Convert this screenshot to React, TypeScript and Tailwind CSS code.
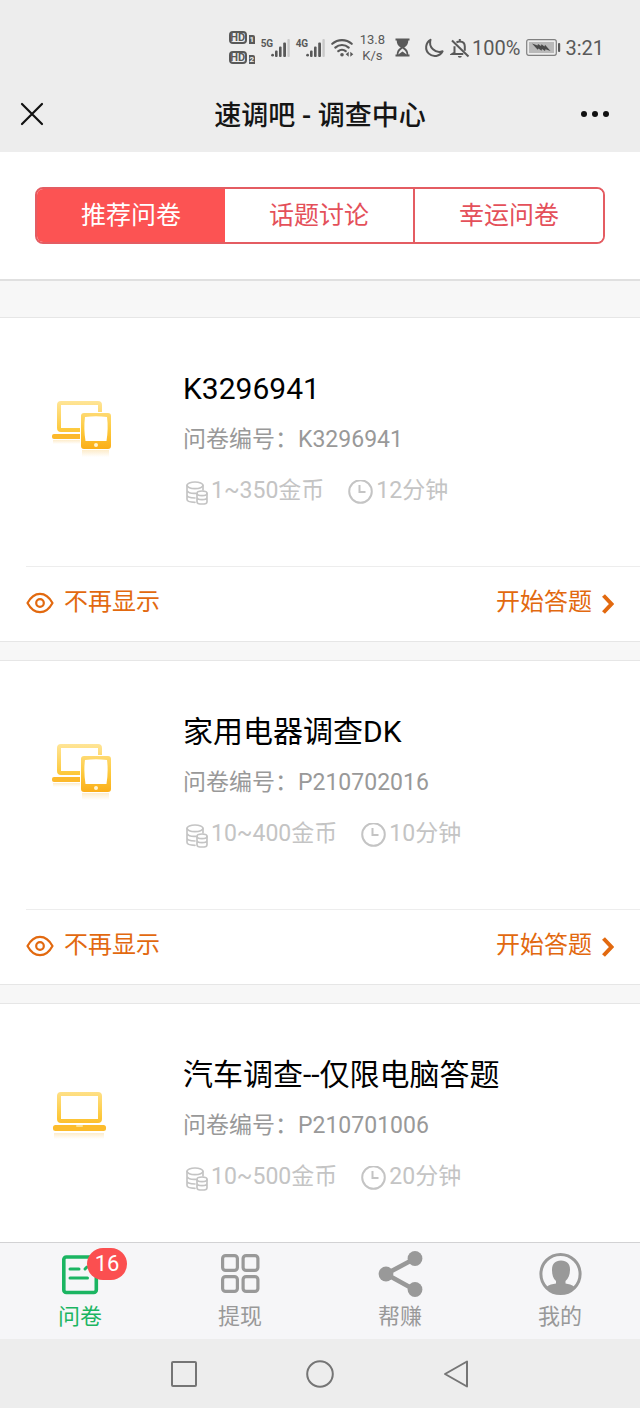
import { useState } from "react";
import type { ReactNode } from "react";
import { clsx } from "clsx";

const SEGMENTS = ["推荐问卷", "话题讨论", "幸运问卷"];

const SURVEYS = [
  { id: "K3296941", title: "K3296941", coins: "1~350金币", time: "12分钟", device: "multi" },
  { id: "P210702016", title: "家用电器调查DK", coins: "10~400金币", time: "10分钟", device: "multi" },
  { id: "P210701006", title: "汽车调查--仅限电脑答题", coins: "10~500金币", time: "20分钟", device: "laptop" },
];

const TABS = [
  { label: "问卷", icon: <DocIcon />, badge: 16 },
  { label: "提现", icon: <GridIcon /> },
  { label: "帮赚", icon: <ShareIcon /> },
  { label: "我的", icon: <UserIcon /> },
];

/* ---------- status bar ---------- */

function HdBadge({ sim }: { sim: number }) {
  return (
    <div className="flex items-end gap-0.5">
      <span className="flex h-[13px] w-[18px] items-center justify-center rounded-sm border-2 border-[#595959] text-[11px] leading-none font-bold">HD</span>
      <span className="flex h-[9px] w-1.5 items-center justify-center rounded-tr-xs bg-[#595959] text-[8px] leading-none font-bold text-[#ededed]">{sim}</span>
    </div>
  );
}

function Signal({ type }: { type: string }) {
  return (
    <div className="flex items-start">
      <span className="w-2.5 text-[10px] leading-3 font-bold tracking-tight">{type}</span>
      <svg className="h-[19px] w-[19px]" viewBox="0 0 19 19" fill="#595959">
        <circle cx="1.6" cy="17.2" r="1.4" />
        <rect x="4" y="12.5" width="2.6" height="6.5" rx="1" />
        <rect x="8" y="8.5" width="2.6" height="10.5" rx="1" />
        <rect x="12.200" y="4.500" width="2.800" height="14.500" rx="1" />
        <rect x="16.400" y="1" width="2.400" height="18" rx="1" fill="#c9c9c9" />
      </svg>
    </div>
  );
}

function StatusBar() {
  return (
    <div className="flex h-[76px] items-center justify-end pt-[19px] pr-9 text-[#595959]">
      <div className="flex items-center gap-1.5">
        <div className="flex flex-col gap-[7px]">
          <HdBadge sim={1} />
          <HdBadge sim={2} />
        </div>
        <Signal type="5G" />
        <Signal type="4G" />
        <svg className="h-[19px] w-[23px]" viewBox="0 0 23 19" fill="none" stroke="#595959" strokeWidth="2.2" strokeLinecap="round">
          <path d="M1.3 5.8a14.5 14.5 0 0 1 19.4 0" />
          <path d="M4.3 9.6a10 10 0 0 1 13.4 0" />
          <path d="M7.3 13.2a5.6 5.6 0 0 1 7.4 0" />
          <circle cx="11" cy="16.8" r="1.8" fill="#595959" stroke="none" />
          <path d="M17.7 13.8v5l-3-2.5zM19.3 13.8v5l3-2.5z" fill="#595959" stroke="none" />
        </svg>
        <span className="text-center text-[13px] leading-4">13.8<br />K/s</span>
      </div>
      <svg className="ml-2.5 h-[19px] w-[15px]" viewBox="0 0 15 19">
        <path d="M.5.5h14v2h-1.2c0 3.4-1.5 5.5-4 7 2.5 1.5 4 3.6 4 7h1.2v2H.5v-2h1.2c0-3.4 1.5-5.5 4-7-2.5-1.5-4-3.6-4-7H.5z" fill="#595959" />
        <path d="M7.5 10.5c-2.3 1.4-3.8 3.2-4.200 6 1.400-.6 2.700-2 4.200-2.900 1.500.9 2.800 2.300 4.200 2.900-.4-2.800-1.900-4.600-4.200-6z" fill="#ededed" />
      </svg>
      <svg className="ml-3.5 h-5 w-5" viewBox="0 0 20 20" fill="none" stroke="#595959" strokeWidth="2" strokeLinejoin="round">
        <path d="M6.5 1.8A8.7 8.7 0 1 0 18.6 13.3 9.3 9.3 0 0 1 6.5 1.8z" />
      </svg>
      <svg className="ml-1.5 h-5 w-5" viewBox="0 0 20 20" fill="none" stroke="#595959" strokeWidth="2">
        <path d="M2 2.5 18.5 18.5" />
        <path d="M4.5 8.2V14.500L2.300 16H13.300M6.500 4.500C7.300 3.800 8 3.400 9.800 3.400c3.200 0 5 2.200 5 5.200v4.200M9.800 1v2.400" />
        <path d="M7.800 18h4a2 1.800 0 0 1-4 0z" fill="#595959" stroke="none" />
      </svg>
      <span className="ml-0.5 text-xl leading-6">100%</span>
      <svg className="ml-1.5 h-[17px] w-[35px]" viewBox="0 0 35 17">
        <rect x=".7" y=".7" width="29.6" height="15.6" rx="2" fill="#ededed" stroke="#808080" strokeWidth="1.2" />
        <rect x="3" y="3" width="25" height="11" fill="#b9b9b9" />
        <rect x="32" y="4" width="2.2" height="9" rx="1" fill="#595959" />
        <path d="M6 4.500l5.500 2L12 5l3 2 .5-1.800 3 2.200.5-1.600L24.500 12l-5-1.800-.5 1.800-3-2-.5 1.800-3-2.200-.8 1.200z" fill="#4a4a4a" />
      </svg>
      <span className="ml-1 text-xl leading-6">3:21</span>
    </div>
  );
}

function TitleBar() {
  return (
    <div className="flex h-[76px] items-center justify-between px-5">
      <button type="button" aria-label="关闭" className="w-10">
        <svg className="h-6 w-6" viewBox="0 0 24 24" fill="none" stroke="#111" strokeWidth="2.2" strokeLinecap="round">
          <path d="M2 2l20 20M22 2 2 22" />
        </svg>
      </button>
      <h1 className="pt-1 text-[27px] leading-9 font-medium text-[#151515]">速调吧 - 调查中心</h1>
      <button type="button" aria-label="更多" className="w-10">
        <svg className="h-6 w-[30px]" viewBox="0 0 30 24" fill="#111">
          <circle cx="4" cy="12" r="3" />
          <circle cx="15" cy="12" r="3" />
          <circle cx="26" cy="12" r="3" />
        </svg>
      </button>
    </div>
  );
}

/* ---------- card icons ---------- */

function DeviceIcon({ device }: { device: string }) {
  const id = `gold-${device}`;
  return (
    <svg className="h-[60px] w-[60px]" viewBox="0 0 60 60" fill="none">
      <defs>
        <linearGradient id={id} x1="0" y1="0" x2="0" y2="50" gradientUnits="userSpaceOnUse">
          <stop offset="0" stopColor="#ffe69a" />
          <stop offset="0.6" stopColor="#fdc93c" />
          <stop offset="1" stopColor="#fbad17" />
        </linearGradient>
        <linearGradient id={`${id}-fade`} x1="0" y1="0" x2="0" y2="1">
          <stop offset="0" stopColor="#fdeccb" />
          <stop offset="1" stopColor="#fff" />
        </linearGradient>
      </defs>
      {device === "multi" ? (
        <>
          <path d="M1 40h28v4H1z" fill={`url(#${id}-fade)`} />
          <path d="M30 50h27v7H30z" fill={`url(#${id}-fade)`} />
          <rect x="7" y="3" width="41" height="27" rx="2" stroke={`url(#${id})`} strokeWidth="4" />
          <rect x="0" y="34" width="32" height="5" rx="2" fill="#fcb92b" />
          <rect x="28" y="12" width="32" height="38" fill="#fff" />
          <path fillRule="evenodd" d="M32 13h24q3 0 3 3v30q0 3-3 3H32q-3 0-3-3V16q0-3 3-3zM33 17q-1.500 11 .5 24h21q2-13 .5-24-11-1.500-22 0z" fill={`url(#${id})`} />
          <circle cx="44" cy="45" r="2" fill="#fff4d0" />
        </>
      ) : (
        <>
          <path d="M2 47h50v6H2z" fill={`url(#${id}-fade)`} />
          <rect x="7" y="8" width="41" height="27" rx="2" stroke={`url(#${id})`} strokeWidth="4" />
          <rect x="1" y="39" width="53" height="6" rx="2.5" fill="#fcbc2c" />
          <rect x="24" y="39" width="7" height="2" rx="1" fill="#ffe08a" />
        </>
      )}
    </svg>
  );
}

function CoinsIcon() {
  return (
    <svg className="mt-1 h-6 w-[22px]" viewBox="0 0 66 72" fill="none" stroke="currentColor" strokeWidth="5" strokeLinecap="round">
      <ellipse cx="27" cy="13" rx="24" ry="10" />
      <path d="M3 13v42c0 5 9 9 24 9M51 13v14M3 28c0 6 11 10 26 9M3 42c0 5 9 9 24 9" />
      <ellipse cx="48" cy="37" rx="15" ry="7" />
      <path d="M33 37v25c0 4 6 7 15 7s15-3 15-7V37M33 49c0 4 6 7 15 7s15-3 15-7" />
    </svg>
  );
}

function ClockIcon() {
  return (
    <svg className="mt-0.5 h-6 w-[25px]" viewBox="0 1 25 24" fill="none" stroke="currentColor" strokeWidth="2">
      <circle cx="12.5" cy="12.5" r="11.3" />
      <path d="M11.5 6v7h6" />
    </svg>
  );
}

function SurveyCard({ survey }: { survey: (typeof SURVEYS)[number] }) {
  return (
    <article className="border-y border-[#e6e6e6] bg-white">
      <div className="flex pt-12 pr-6 pb-[58px] pl-[52px]">
        <div className="w-[131px] shrink-0 pt-[34px]">
          <DeviceIcon device={survey.device} />
        </div>
        <div className="min-w-0 flex-1">
          <h2 className="text-[30px] leading-[46px] text-black">{survey.title}</h2>
          <p className="mt-2 text-[23px] leading-10 text-[#999]">问卷编号：{survey.id}</p>
          <div className="mt-3.5 flex gap-6 text-[23px] leading-[34px] text-[#c4c4c4]">
            <span className="flex items-center gap-[3px] pl-[3px]">
              <CoinsIcon />
              {survey.coins}
            </span>
            <span className="flex items-center gap-[3px]">
              <ClockIcon />
              {survey.time}
            </span>
          </div>
        </div>
      </div>
      <div className="ml-[26px] flex h-[75px] items-center justify-between border-t border-[#ededed] pr-[26px] pb-1 text-2xl text-[#e2690f]">
        <button type="button" className="flex items-center gap-2.5">
          <svg className="mt-0.5 h-[22px] w-7" viewBox="0 0 28 22" fill="none" stroke="currentColor" strokeWidth="2.2">
            <path d="M1.5 11C5 4.5 9.3 1.8 14 1.8S23 4.500 26.500 11C23 17.500 18.700 20.200 14 20.200S5 17.500 1.500 11z" strokeLinejoin="round" />
            <circle cx="14" cy="11" r="3.8" />
          </svg>
          不再显示
        </button>
        <a href={`#${survey.id}`} className="flex items-center gap-2.5">
          开始答题
          <svg className="mt-1 h-5 w-3" viewBox="0 0 12 20" fill="none" stroke="currentColor" strokeWidth="4">
            <path d="M1.5 1.5 9.5 10l-8 8.5" />
          </svg>
        </a>
      </div>
    </article>
  );
}

/* ---------- bottom tabs ---------- */

function DocIcon() {
  return (
    <svg className="h-12 w-12" viewBox="0 0 48 48" fill="none" stroke="currentColor" strokeWidth="3.6" strokeLinecap="round">
      <rect x="7.8" y="7" width="32.5" height="35.5" rx="2.5" />
      <path d="M14 19h9M14 28h17.500" strokeWidth="3" />
      <path d="M29 19l2-2" strokeWidth="3" />
    </svg>
  );
}

function GridIcon() {
  return (
    <svg className="h-12 w-12" viewBox="0 0 48 48" fill="none" stroke="currentColor" strokeWidth="3.2">
      <rect x="6.6" y="5.6" width="14.8" height="14.8" rx="3" />
      <rect x="27.1" y="5.6" width="14.8" height="14.8" rx="3" />
      <rect x="6.6" y="26.6" width="14.8" height="14.8" rx="3" />
      <rect x="27.1" y="26.6" width="14.8" height="14.8" rx="3" />
    </svg>
  );
}

function ShareIcon() {
  return (
    <svg className="h-12 w-12" viewBox="0 0 48 48" fill="currentColor">
      <path d="M39 8.5 10 24l29 16" fill="none" stroke="currentColor" strokeWidth="4.6" />
      <circle cx="39" cy="8.5" r="7.4" />
      <circle cx="10" cy="24" r="7.4" />
      <circle cx="39" cy="39.5" r="7.4" />
    </svg>
  );
}

function UserIcon() {
  return (
    <svg className="h-12 w-12" viewBox="0 0 48 48" fill="currentColor">
      <circle cx="24.5" cy="24" r="19.6" fill="none" stroke="currentColor" strokeWidth="3" />
      <path d="M25 10.5c6 0 9 3.500 9 9 0 5-1.600 9-4.500 11.500v2.500c3 .6 6.500 1.200 9 3.500A19.500 19.500 0 0 1 10.500 37c2.500-2.300 6-2.900 9.500-3.500V31c-2.900-2.500-4-6.500-4-11.500 0-5.500 3-9 9-9z" />
    </svg>
  );
}

type TabProps = {
  label: string;
  icon: ReactNode;
  badge?: number;
  active: boolean;
  onClick: () => void;
};

function TabButton({ label, icon, badge, active, onClick }: TabProps) {
  return (
    <button
      type="button"
      onClick={onClick}
      className={clsx("flex flex-1 flex-col items-center gap-1 py-[7px]", active ? "text-[#1bb562]" : "text-[#999]")}
    >
      <span className="relative">
        {icon}
        {badge && (
          <span className="absolute -top-0.5 left-[31px] flex h-8 w-10 items-center justify-center rounded-full bg-[#fb4f50] text-[22px] leading-none text-white">
            {badge}
          </span>
        )}
      </span>
      <span className="text-[22px] leading-[30px]">{label}</span>
    </button>
  );
}

export default function App() {
  const [segment, setSegment] = useState(0);
  const [tab, setTab] = useState(0);

  return (
    <div className="flex h-screen flex-col bg-[#f7f7f7] font-[Roboto,'Noto_Sans_CJK_SC',sans-serif]">
      <header className="shrink-0 bg-[#ededed]">
        <StatusBar />
        <TitleBar />
      </header>

      <main className="min-h-0 flex-1 overflow-y-auto [scrollbar-width:none]">
        <div className="border-b-2 border-[#e0e0e0] bg-white p-[35px]">
          <div className="flex h-[57px] overflow-hidden rounded-lg border-2 border-[#e45c62]">
            {SEGMENTS.map((label, i) => (
              <button
                key={label}
                type="button"
                onClick={() => setSegment(i)}
                className={clsx(
                  "flex-1 text-[25px]",
                  i > 1 && "border-l-2 border-[#e45c62]",
                  segment === i ? "bg-[#fc5353] text-white" : "bg-white text-[#e4505a]"
                )}
              >
                {label}
              </button>
            ))}
          </div>
        </div>

        <div className="mt-9 flex flex-col gap-[18px]">
          {SURVEYS.map((s) => (
            <SurveyCard key={s.id} survey={s} />
          ))}
        </div>
      </main>

      <nav className="flex shrink-0 border-t border-[#d2d2d4] bg-[#f6f6f8]">
        {TABS.map((t, i) => (
          <TabButton key={t.label} {...t} active={tab === i} onClick={() => setTab(i)} />
        ))}
      </nav>

      {/* system navigation */}
      <div className="flex h-[69px] shrink-0 items-center justify-center gap-[108px] bg-[#ededed] text-[#757575]">
        <button type="button" aria-label="最近任务">
          <svg className="h-7 w-7" viewBox="0 0 28 28" fill="none" stroke="currentColor" strokeWidth="2">
            <rect x="2" y="2" width="24" height="24" rx="1" />
          </svg>
        </button>
        <button type="button" aria-label="主屏幕">
          <svg className="h-7 w-7" viewBox="0 0 28 28" fill="none" stroke="currentColor" strokeWidth="2">
            <circle cx="14" cy="14" r="12.8" />
          </svg>
        </button>
        <button type="button" aria-label="返回">
          <svg className="h-7 w-7" viewBox="0 0 28 28" fill="none" stroke="currentColor" strokeWidth="2" strokeLinejoin="round">
            <path d="M25 1.5v25L3 14z" />
          </svg>
        </button>
      </div>
    </div>
  );
}
